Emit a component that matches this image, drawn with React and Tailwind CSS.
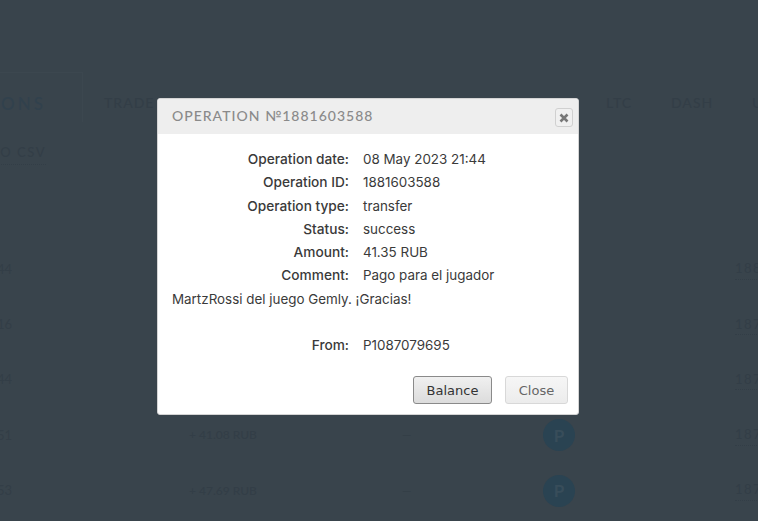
import React from 'react';

const rows = [
  { date: '08 May 2023 21:44', amount: '+ 41.35 RUB', id: '1881603588' },
  { date: '02 May 2023 13:16', amount: '+ 38.20 RUB', id: '1871190427' },
  { date: '02 May 2023 12:44', amount: '+ 52.11 RUB', id: '1871173306' },
  { date: '02 May 2023 10:51', amount: '+ 41.08 RUB', id: '1871022815' },
  { date: '01 May 2023 20:53', amount: '+ 47.69 RUB', id: '1870644192' },
];

const details = [
  ['Operation date:', '08 May 2023 21:44'],
  ['Operation ID:', '1881603588'],
  ['Operation type:', 'transfer'],
  ['Status:', 'success'],
  ['Amount:', '41.35 RUB'],
];

const Label = ({ children }) => (
  <span className="inline-block w-[177px] mr-[14px] text-right text-[13.7px] font-medium">{children}</span>
);

const Background = () => (
  <div className="h-[521px] overflow-hidden bg-[#39444c] text-[#333e47] font-['Lato',sans-serif] whitespace-nowrap">
    <div className="h-[72px]" />
    <div className="flex h-[50px] pt-[10px] items-center text-[14px] tracking-[1px] font-medium">
      <div className="w-[83px] h-[50px] -mt-[10px] pt-[18px] shrink-0 border-t border-r border-[#3c474f]">
        <span className="w-[46px] flex justify-end overflow-hidden text-[17px] text-[#31414d] tracking-[3px]">
          <span>OPERATIONS</span>
        </span>
      </div>
      <span className="w-[502px] ml-[21px] shrink-0">TRADE</span>
      <span className="w-[65px] shrink-0">LTC</span>
      <span className="w-[81px] shrink-0">DASH</span>
      <span className="shrink-0">USDT</span>
    </div>
    <div className="mt-[21px] flex justify-end w-[46px] overflow-hidden text-[13px] tracking-[1.5px] font-medium">
      <span className="border-b border-dotted border-[#333e47] pb-px">EXPORT TO CSV</span>
    </div>
    <div className="mt-[93px] flex flex-col gap-[31.3px]">
      {rows.map((row) => (
        <div key={row.id} className="flex h-[24px] items-center text-[12px]">
          <div className="w-[189px] shrink-0 flex">
            <span className="w-[12px] flex justify-end overflow-hidden text-[13px]">
              <span>{row.date}</span>
            </span>
          </div>
          <span className="w-[213px] shrink-0 font-medium">{row.amount}</span>
          <span className="w-[141px] shrink-0">—</span>
          <span className="w-[32px] h-[32px] -my-1 shrink-0 rounded-full bg-[#2a4352] text-[#384d5a] text-[17px] font-bold flex items-center justify-center">P</span>
          <span className="ml-[160px] shrink-0 tracking-[1.5px] text-[13px] border-b border-dotted border-[#333e47]">{row.id}</span>
        </div>
      ))}
    </div>
  </div>
);

const App = () => (
  <div className="relative h-[521px] overflow-hidden">
    <Background />
    <div className="absolute left-[157px] top-[98px] w-[422px] h-[317px] rounded-[3px] bg-white border border-[#d4d4d4] overflow-hidden flex flex-col text-[#3a3a3a] font-['Inter',sans-serif]">
      <div className="h-[35px] shrink-0 bg-[#eeeeee] flex items-center justify-between pl-[14px] pr-[5px]">
        <span className="-mt-[3px] font-['Lato',sans-serif] text-[14px] font-medium tracking-[1px] text-[#8a8a8a]">OPERATION №1881603588</span>
        <button className="w-[18px] h-[19px] mt-[2px] rounded-[3px] border border-[#d0d0d0] bg-[#f0f0f0] flex items-center justify-center text-[#777777]">
          <svg width="10" height="10" viewBox="0 0 10 10">
            <path d="M1.5 1.5l7 7M8.5 1.5l-7 7" stroke="currentColor" strokeWidth="2.6" />
          </svg>
        </button>
      </div>
      <div className="flex-1 pl-[14px] pr-[14px] pt-[14px] text-[13.4px] leading-[23.3px]">
        {details.map(([label, value]) => (
          <div key={label}>
            <Label>{label}</Label>
            {value}
          </div>
        ))}
        <div>
          <Label>Comment:</Label>
          Pago para el jugador MartzRossi del juego Gemly. ¡Gracias!
        </div>
        <div className="mt-[23.3px]">
          <Label>From:</Label>
          P1087079695
        </div>
      </div>
      <div className="flex justify-end gap-[13px] pr-[10px] pb-[10px] font-['DejaVu_Sans',sans-serif] text-[13px]">
        <button className="w-[79px] h-[28px] pt-px rounded-[3px] border border-[#8a8a8a] bg-gradient-to-b from-[#f0f0f0] to-[#dcdcdc] text-[#333333]">Balance</button>
        <button className="w-[63px] h-[28px] pt-px rounded-[3px] border border-[#d8d8d8] bg-gradient-to-b from-[#f6f6f6] to-[#ececec] text-[#666666]">Close</button>
      </div>
    </div>
  </div>
);

export default App;
